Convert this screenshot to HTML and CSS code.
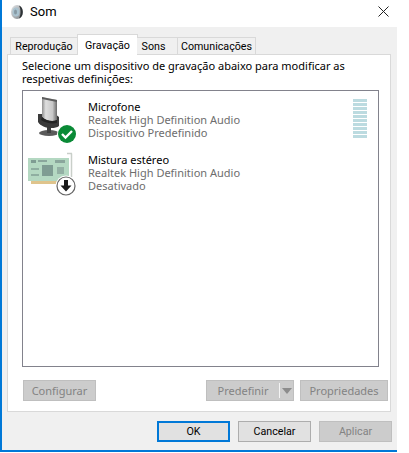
FILE: index.html
```html
<!DOCTYPE html>
<html lang="pt">
<head>
    <meta charset="UTF-8">
    <meta name="viewport" content="width=device-width, initial-scale=1.0">
    <title>Som</title>
    <link rel="stylesheet" href="styles.css">
</head>
<body>
    <div class="window">
        <header class="titlebar">
            <svg class="app-icon" width="16" height="16" viewBox="0 0 16 16">
                <defs>
                    <linearGradient id="speaker" x1="0" y1="0" x2="1" y2="1">
                        <stop offset="0" stop-color="#e4e6e8"/>
                        <stop offset="1" stop-color="#7d8286"/>
                    </linearGradient>
                </defs>
                <ellipse cx="7" cy="8" rx="6" ry="7" fill="url(#speaker)"/>
                <ellipse cx="6" cy="8" rx="3.500" ry="4.500" fill="#a9c2cf"/>
                <ellipse cx="5.500" cy="8" rx="1.500" ry="2.500" fill="#8799a3"/>
                <path d="M9 1.500 C14 3 14 13 9 14.500 C11 11 11 5 9 1.500Z" fill="#2e3235"/>
            </svg>
            <span class="title">Som</span>
            <svg class="close" width="11" height="11" viewBox="0 0 11 11">
                <path d="M0.500 0.500 L10.500 10.500 M10.500 0.500 L0.500 10.500" stroke="#222" stroke-width="1" fill="none"/>
            </svg>
        </header>

        <div class="body">
            <nav class="tabs">
                <div class="tab tab-first">Reprodução</div>
                <div class="tab tab-active">Gravação</div>
                <div class="tab tab-sons">Sons</div>
                <div class="tab tab-last">Comunicações</div>
            </nav>

            <section class="panel">
                <p class="intro">Selecione um dispositivo de gravação abaixo para modificar as<br>respetivas definições:</p>

                <div class="listbox">
                    <div class="device">
                        <svg class="device-icon" width="50" height="50" viewBox="0 0 50 50">
                            <defs>
                                <linearGradient id="mic" x1="0" y1="0" x2="1" y2="0">
                                    <stop offset="0" stop-color="#8f8f8f"/>
                                    <stop offset="0.25" stop-color="#dedede"/>
                                    <stop offset="0.7" stop-color="#c8c8c8"/>
                                    <stop offset="1" stop-color="#6a6a6a"/>
                                </linearGradient>
                            </defs>
                            <ellipse cx="22" cy="38" rx="10" ry="3" fill="#5a5a5a"/>
                            <rect x="20" y="31" width="4" height="7" fill="#3f3f3f"/>
                            <path d="M11 19 L11 27 C14 33 27 35 32 31 L32 22 L28 19Z" fill="#3a3a3a"/>
                            <path d="M15 2 L30 5 L30 25 C26 27 19 26 15 22Z" fill="url(#mic)"/>
                            <path d="M15 2 L30 5 L30 7 L15 4Z" fill="#5c5c5c"/>
                            <path d="M15 22 C19 26 26 27 30 25 L30 28 C25 29 18 28 14 25Z" fill="#242424"/>
                            <circle cx="40" cy="39" r="10" fill="#fff"/>
                            <circle cx="40" cy="39" r="9" fill="#0a8a36"/>
                            <path d="M35 39 L38.500 42.500 L45 36" stroke="#fff" stroke-width="2.400" fill="none"/>
                        </svg>
                        <div class="device-text">
                            <span class="device-name">Microfone</span>
                            <span>Realtek High Definition Audio</span>
                            <span>Dispositivo Predefinido</span>
                        </div>
                        <div class="meter">
                            <i></i><i></i><i></i><i></i><i></i><i></i><i></i><i></i><i></i><i></i>
                        </div>
                    </div>

                    <div class="device">
                        <svg class="device-icon" width="50" height="50" viewBox="0 0 50 50">
                            <path d="M40 5.500 L45 5.500 M44.500 5.500 L44.500 29" stroke="#c9cfc9" stroke-width="1.500" fill="none"/>
                            <rect x="1" y="10" width="41" height="23" fill="#b4d8c2"/>
                            <rect x="4" y="33" width="26" height="3" fill="#dfc48c"/>
                            <rect x="15" y="17" width="11" height="11" fill="#7f9c93"/>
                            <rect x="4" y="12" width="5" height="3" fill="#7f9c93"/>
                            <rect x="11" y="12" width="9" height="2" fill="#8aa69c"/>
                            <rect x="28" y="12" width="10" height="3" fill="#8aa69c"/>
                            <rect x="30" y="19" width="7" height="7" fill="#93b0a4"/>
                            <rect x="4" y="20" width="8" height="2" fill="#8faea1"/>
                            <rect x="4" y="26" width="8" height="2" fill="#8faea1"/>
                            <circle cx="39" cy="38" r="10.500" fill="#fff"/>
                            <circle cx="39" cy="38" r="9" fill="#fff" stroke="#666" stroke-width="1.200"/>
                            <path d="M37 32 H41 V37.500 H44.500 L39 43.500 L33.500 37.500 H37Z" fill="#1a1a1a"/>
                        </svg>
                        <div class="device-text">
                            <span class="device-name">Mistura estéreo</span>
                            <span>Realtek High Definition Audio</span>
                            <span>Desativado</span>
                        </div>
                    </div>
                </div>

                <div class="panel-actions">
                    <button class="btn btn-configure" disabled>Configurar</button>
                    <div class="actions-right">
                        <div class="split-btn">
                            <span class="split-label">Predefinir</span>
                            <span class="split-divider"></span>
                            <span class="split-arrow"></span>
                        </div>
                        <button class="btn btn-props" disabled>Propriedades</button>
                    </div>
                </div>
            </section>

            <footer class="footer">
                <button class="btn btn-ok">OK</button>
                <button class="btn btn-cancel">Cancelar</button>
                <button class="btn btn-apply" disabled>Aplicar</button>
            </footer>
        </div>
    </div>
</body>
</html>
```

FILE: styles.css
```css
:root {
    --window-bg: #f0f0f0;
    --line: #d9d9d9;
    --blue: #0078d7;
    --muted: #6d6d6d;
    --disabled-bg: #cccccc;
    --disabled-text: #838383;
}
* { box-sizing: border-box; }
body {
    margin: 0;
    background: #fff;
    color: #000;
    font-family: "Noto Sans", "DejaVu Sans", sans-serif;
    font-size: 11px;
}
.window {
    width: 397px;
    height: 452px;
    display: flex;
    flex-direction: column;
    border-left: 2px solid var(--blue);
    border-bottom: 2px solid var(--blue);
}
.titlebar {
    height: 27px;
    flex: none;
    display: flex;
    align-items: center;
    background: #fff;
    padding: 0 0 4px 8px;
}
.app-icon { flex: none; }
.title { margin-left: 4px; font-family: Roboto, sans-serif; font-size: 13px; }
.close { margin-left: auto; margin-right: 8px; }

.body {
    flex: 1;
    display: flex;
    flex-direction: column;
    background: var(--window-bg);
    padding: 7px 0 0 5px;
}
.tabs {
    height: 20px;
    flex: none;
    display: flex;
    align-items: flex-end;
    padding-left: 4px;
    position: relative;
    z-index: 1;
}
.tab {
    height: 17px;
    flex: none;
    border: 1px solid var(--line);
    border-bottom: 0;
    background: var(--window-bg);
    display: flex;
    align-items: center;
    justify-content: center;
    font-family: Roboto, sans-serif;
    font-size: 10.700px;
    margin-left: -1px;
}
.tab-first { width: 68px; }
.tab-active { width: 61px; height: 21px; background: #fff; margin-bottom: -1px; }
.tab-sons { width: 41px; border-right: 0; border-left: 0; padding-right: 8px; }
.tab-last { width: 79px; }

.panel {
    width: 384px;
    height: 358px;
    flex: none;
    display: flex;
    flex-direction: column;
    background: #fff;
    border: 1px solid var(--line);
    padding: 4px 2px 0 14px;
}
.intro {
    margin: 0;
    height: 31px;
    line-height: 13px;
}
.listbox {
    width: 357px;
    height: 277px;
    flex: none;
    border: 1px solid #82828c;
    padding: 4px 0 0 4px;
    display: flex;
    flex-direction: column;
    gap: 3px;
}
.device {
    height: 50px;
    display: flex;
    align-items: center;
}
.device-icon { flex: none; }
.device-text {
    display: flex;
    flex-direction: column;
    margin-left: 11px;
    padding-bottom: 2px;
    line-height: 13px;
    color: var(--muted);
}
.device-name { color: #000; }
.meter {
    margin-left: auto;
    margin-right: 11px;
    align-self: flex-start;
    margin-top: 4px;
    display: flex;
    flex-direction: column;
    gap: 1px;
}
.meter i {
    display: block;
    width: 14px;
    height: 3px;
    background: #bcdbe0;
}

.panel-actions {
    display: flex;
    justify-content: space-between;
    margin-top: 13px;
    padding-left: 1px;
}
.actions-right { display: flex; gap: 6px; }
.btn {
    height: 21px;
    flex: none;
    padding: 0;
    font: inherit;
    border: 1px solid #adadad;
    background: #e1e1e1;
    color: #000;
}
.btn:disabled {
    background: var(--disabled-bg);
    border-color: #bfbfbf;
    color: var(--disabled-text);
}
.btn-configure { width: 73px; }
.btn-props { width: 88px; }
.split-btn {
    width: 88px;
    height: 21px;
    display: flex;
    align-items: center;
    background: var(--disabled-bg);
    border: 1px solid #bfbfbf;
    color: var(--disabled-text);
}
.split-label { width: 72px; text-align: center; }
.split-divider { width: 1px; height: 15px; background: #f4f4f4; }
.split-arrow {
    margin-left: 2px;
    width: 0;
    height: 0;
    border-left: 5px solid transparent;
    border-right: 5px solid transparent;
    border-top: 6px solid #8c8c8c;
}

.footer {
    display: flex;
    gap: 8px;
    margin-top: 9px;
    padding-left: 150px;
}
.footer .btn {
    width: 73px;
    font-family: Roboto, sans-serif;
    font-size: 10.700px;
}
.btn-ok { border: 2px solid var(--blue); }
```
